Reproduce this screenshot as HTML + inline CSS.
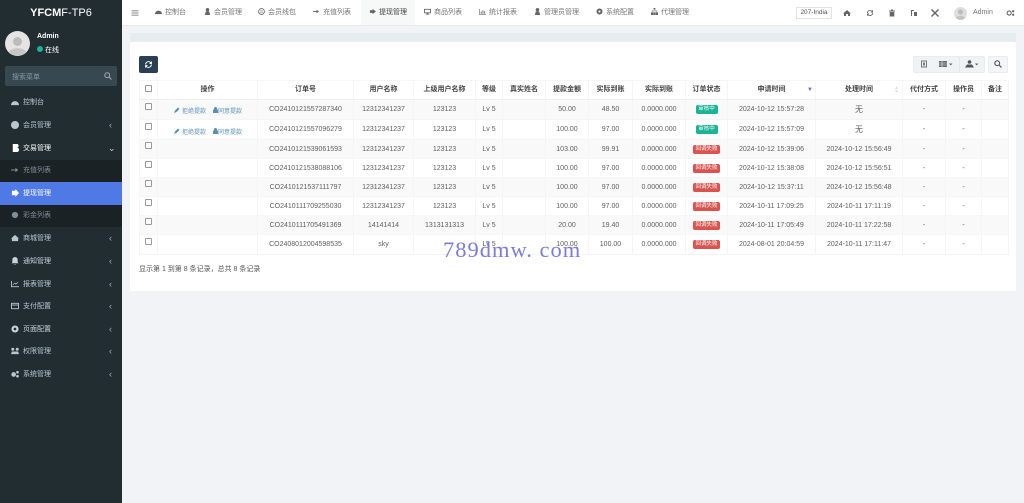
<!DOCTYPE html>
<html><head><meta charset="utf-8">
<style>
*{box-sizing:border-box}
html,body{margin:0;padding:0;width:1024px;height:503px;overflow:hidden;background:#f1f3f7;font-family:"Liberation Sans","Noto Sans CJK SC",sans-serif;font-size:7px;color:#555}
.a{position:absolute;white-space:nowrap}
#side{position:absolute;left:0;top:0;width:122px;height:503px;background:#222d32}
#head{position:absolute;left:122px;top:0;width:902px;height:26px;background:#fff;border-bottom:1px solid #e8ebed}
.m{position:absolute;left:0;width:122px;height:23px;color:#b8c7ce;font-size:7px;line-height:23px}
.m svg{position:absolute;left:11px;top:7px;width:8px;height:8px;fill:currentColor}
.m span{position:absolute;left:23px}
.m i{position:absolute;left:109px;top:0;font-style:normal;font-size:9px;color:#aab}
.n{position:absolute;top:0;height:26px;line-height:25px;font-size:7px;color:#777;white-space:nowrap}
.n svg{width:7px;height:7px;fill:#666;vertical-align:-1px;margin-right:3px}
.h{position:absolute;top:9px;width:8px;height:8px;fill:#666}
table{position:absolute;left:139px;top:80px;width:869px;border-collapse:collapse;table-layout:fixed;font-size:7px;color:#5f5f5f;text-align:center}
td,th{border:1px solid #f5f5f5;padding:0;overflow:hidden;white-space:nowrap}
th{height:19px;padding-bottom:2px;font-size:7px;color:#444;font-weight:bold;border-bottom:1px solid #eee}
tr.o td{background:#f9f9f9}
.cb{display:inline-block;width:7px;height:7px;border:1px solid #999;border-radius:1px;background:#fff;vertical-align:middle;position:relative;top:-3px}
.g,.r{display:inline-block;color:#fff;font-size:5.500px;border-radius:2px;line-height:9px;height:9px;vertical-align:middle}
.g{background:#1ab394;width:22px}.r{background:#d9534f;width:27px}
.lk{color:#5a90b8;font-size:6px;position:absolute;top:0}
.btn{position:absolute;top:56px;height:17px;background:#f0f2f4;border:1px solid #e9ebed}
</style></head><body>
<div id="side">
 <div class="a" style="left:0;top:7px;width:122px;text-align:center;color:#fff;font-size:11px;font-weight:bold">YFCM<span style="font-weight:normal">F-TP6</span></div>
 <svg class="a" style="left:5px;top:31px" width="25" height="25" viewBox="0 0 25 25"><circle cx="12.500" cy="12.500" r="12.500" fill="#e5e3e3"/><circle cx="12.500" cy="10.500" r="4.500" fill="#bbb"/><path d="M4 21c2-5 15-5 17 0a12 12 0 0 1-17 0z" fill="#c6c6c6"/></svg>
 <div class="a" style="left:37px;top:33px;color:#fff;font-weight:bold;font-size:7px;">Admin</div>
 <div class="a" style="left:37px;top:46px;width:6px;height:6px;border-radius:50%;background:#1ab394"></div>
 <div class="a" style="left:45px;top:45px;color:#fff;font-size:7px;">在线</div>
 <div class="a" style="left:5px;top:66px;width:112px;height:20px;background:#374850;border-radius:2px"></div>
 <div class="a" style="left:12px;top:72px;color:#8a9aa2;font-size:7px">搜索菜单</div>
 <svg class="a" style="left:104px;top:72px" width="8" height="8" viewBox="0 0 8 8"><circle cx="3.200" cy="3.200" r="2.400" fill="none" stroke="#aab" stroke-width="1"/><path d="M5 5l2.500 2.500" stroke="#aab"/></svg>

 <div class="m" style="top:91px"><svg viewBox="0 0 9 9"><path d="M0 8a4.500 4.500 0 0 1 9 0z"/></svg><span>控制台</span></div>
 <div class="m" style="top:114px"><svg viewBox="0 0 9 9"><circle cx="4.500" cy="4.500" r="4.500"/></svg><span>会员管理</span><i>‹</i></div>
 <div class="m" style="top:137px;color:#fff"><svg viewBox="0 0 9 9"><path d="M2 0h4a2 2 0 0 1 1 4a2.500 2.500 0 0 1-1 5H2z"/></svg><span>交易管理</span><i style="left:108px;color:#ccc">⌄</i></div>
 <div class="a" style="left:0;top:160px;width:122px;height:22px;background:#1b2226"></div>
 <div class="m" style="top:159px;color:#7f8e96"><svg viewBox="0 0 9 9"><path d="M0 4h5V2l3 2.500-3 2.500V5H0z"/></svg><span>充值列表</span></div>
 <div class="a" style="left:0;top:182px;width:122px;height:23px;background:#4f7ae6"></div>
 <div class="m" style="top:182px;color:#fff"><svg viewBox="0 0 9 9"><path d="M1 2h4V0l4 4.500L5 9V7H1z"/></svg><span>提现管理</span></div>
 <div class="a" style="left:0;top:205px;width:122px;height:22px;background:#1b2226"></div>
 <div class="m" style="top:204px;color:#7f8e96"><svg viewBox="0 0 9 9"><circle cx="4.500" cy="4.500" r="3.500"/></svg><span>彩金列表</span></div>
 <div class="m" style="top:227px"><svg viewBox="0 0 9 9"><path d="M4.500 1L9 5H8v3H1V5H0z"/></svg><span>商城管理</span><i>‹</i></div>
 <div class="m" style="top:250px;color:#c8d4d9"><svg viewBox="0 0 9 9"><path d="M4.500 0a3 3 0 0 1 3 3v3l1 1H.5l1-1V3a3 3 0 0 1 3-3zM3.500 8h2l-1 1z"/></svg><span>通知管理</span><i>‹</i></div>
 <div class="m" style="top:273px"><svg viewBox="0 0 9 9"><path d="M0 1h1v6h8v1H0zM2 5l2-2 1.500 1L8 2v1L5.500 5 4 4 2 6z"/></svg><span>报表管理</span><i>‹</i></div>
 <div class="m" style="top:295px"><svg viewBox="0 0 9 9"><path d="M0 1h9v7H0zM1 2v1h7V2zM1 4v3h7V4z"/></svg><span>支付配置</span><i>‹</i></div>
 <div class="m" style="top:318px;color:#c8d4d9"><svg viewBox="0 0 9 9"><path d="M4.500 .5a4 4 0 1 0 0 8 4 4 0 0 0 0-8zm0 2.500a1.500 1.500 0 1 1 0 3 1.500 1.500 0 0 1 0-3z"/></svg><span>页面配置</span><i>‹</i></div>
 <div class="m" style="top:340px"><svg viewBox="0 0 9 9"><circle cx="2" cy="2.500" r="1.700"/><circle cx="7" cy="2.500" r="1.700"/><path d="M1 5h7l1 3H0z"/></svg><span>权限管理</span><i>‹</i></div>
 <div class="m" style="top:363px"><svg viewBox="0 0 9 9"><circle cx="3" cy="5" r="2.600"/><circle cx="7.300" cy="2.500" r="1.500"/><circle cx="7.300" cy="7" r="1.500"/></svg><span>系统管理</span><i>‹</i></div>
</div>

<div id="head">
 <svg class="h" style="left:9px" viewBox="0 0 8 8"><path d="M.5 1.500h7v.8h-7zM.5 3.600h7v.8h-7zM.5 5.700h7v.8h-7z"/></svg>
 <div class="n" style="left:33px"><svg viewBox="0 0 8 8"><path d="M0 7a4 4 0 0 1 8 0z"/></svg>控制台</div>
 <div class="n" style="left:82px"><svg viewBox="0 0 8 8"><circle cx="4" cy="2" r="2"/><path d="M1 8l1-4h4l1 4z"/></svg>会员管理</div>
 <div class="n" style="left:136px"><svg viewBox="0 0 8 8"><circle cx="4" cy="4" r="3.300" fill="none" stroke="#666"/><path d="M2.500 3h3v.7h-3zM2.500 4.500h3v.7h-3z"/></svg>会员线包</div>
 <div class="n" style="left:191px"><svg viewBox="0 0 8 8"><path d="M0 3.500h4V2l3 2-3 2V4.500H0z"/></svg>充值列表</div>
 <div class="a" style="left:239px;top:0;width:54px;height:25px;background:#f7f8f8"></div>
 <div class="n" style="left:247px;color:#444"><svg viewBox="0 0 8 8"><path d="M1 2.500h3V1l4 3-4 3V5.500H1z"/></svg>提现管理</div>
 <div class="n" style="left:302px"><svg viewBox="0 0 8 8"><path d="M0 1h8v5H5v1h1v.5H2V7h1V6H0zM1 2v3h6V2z"/></svg>商品列表</div>
 <div class="n" style="left:357px"><svg viewBox="0 0 8 8"><path d="M0 1h.7v6H8v.7H0zM2 4h1v2.500H2zM4 2.500h1v4H4zM6 3.500h1v3H6z"/></svg>统计报表</div>
 <div class="n" style="left:412px"><svg viewBox="0 0 8 8"><circle cx="4" cy="2" r="2"/><path d="M1 8l1-4h4l1 4z"/></svg>管理员管理</div>
 <div class="n" style="left:474px"><svg viewBox="0 0 8 8"><path d="M4 .5a3.500 3.500 0 1 0 0 7 3.500 3.500 0 0 0 0-7zm0 2.300a1.200 1.200 0 1 1 0 2.400 1.200 1.200 0 0 1 0-2.400z"/></svg>系统配置</div>
 <div class="n" style="left:529px"><svg viewBox="0 0 8 8"><path d="M3 0h2v2H3zM0 5h2.500v3H0zM2.800 5h2.400v3H2.800zM5.500 5H8v3H5.500zM1 3h6v2H6.500V3.700h-5V5H1z"/></svg>代理管理</div>
 <div class="a" style="left:674px;top:7px;width:36px;height:12px;border:1px solid #e2e2e2;font-size:6.500px;line-height:10px;text-align:center;color:#555">207-India</div>
 <svg class="h" style="left:721px" viewBox="0 0 8 8"><path d="M4 1l4 3.500H7V7H5V5H3v2H1V4.500H0z"/></svg>
 <svg class="h" style="left:744px" viewBox="0 0 8 8"><path d="M1 4a3 3 0 0 1 5-2.200L7 1v2.500H4.500l1-1A2 2 0 0 0 2 4zM7 4a3 3 0 0 1-5 2.200L1 7V4.500h2.500l-1 1A2 2 0 0 0 6 4z"/></svg>
 <svg class="h" style="left:766px" viewBox="0 0 8 8"><path d="M1 1.500h6v1H1zM3 .5h2v1H3zM1.700 3h4.600v4.500H1.700z"/></svg>
 <svg class="h" style="left:788px" viewBox="0 0 8 8"><path d="M1 1h3v1H2v5H1zM4 3h3v4H4z"/></svg>
 <svg class="h" style="left:809px" viewBox="0 0 8 8"><path d="M.5.500l7 7M7.500.500l-7 7" stroke="#666" stroke-width="1.400"/></svg>
 <svg class="a" style="left:832px;top:7px" width="13" height="13" viewBox="0 0 13 13"><circle cx="6.500" cy="6.500" r="6.500" fill="#ddd"/><circle cx="6.500" cy="5" r="2.500" fill="#bbb"/><path d="M2 11c1-3 8-3 9 0a6.500 6.500 0 0 1-9 0z" fill="#c4c4c4"/></svg>
 <div class="a" style="left:851px;top:9px;font-size:7px;color:#777">Admin</div>
 <svg class="h" style="left:884px;width:9px" viewBox="0 0 9 9"><circle cx="3" cy="4.500" r="2.300" fill="none" stroke="#666" stroke-width="1.200"/><circle cx="7.500" cy="2.500" r="1.300"/><circle cx="7.500" cy="6.500" r="1.300"/></svg>
</div>

<div class="a" style="left:130px;top:33px;width:886px;height:10px;background:#e6edef"></div>
<div class="a" style="left:130px;top:42px;width:886px;height:249px;background:#fff;border-radius:2px"></div>
<div class="a" style="left:139px;top:56px;width:19px;height:17px;background:#2b3f54;border-radius:2px"></div>
<svg class="a" style="left:144px;top:60px" width="9" height="9" viewBox="0 0 8 8"><path d="M1 4a3 3 0 0 1 5-2.200L7 1v2.500H4.500l1-1A2 2 0 0 0 2 4zM7 4a3 3 0 0 1-5 2.200L1 7V4.500h2.500l-1 1A2 2 0 0 0 6 4z" fill="#fff"/></svg>
<div class="btn" style="left:913px;width:72px;border-radius:2px"></div>
<div class="btn" style="left:988px;width:20px;border-radius:2px;background:#f4f5f6"></div>
<div class="a" style="left:959px;top:56px;width:1px;height:17px;background:#e6e8ea"></div>
<svg class="a" style="left:920px;top:60px" width="8" height="8" viewBox="0 0 8 8"><path d="M1 .5h6v7H1zM2 1.500v5h4v-5zM3 2.500h2v3H3z" fill="#777"/></svg>
<svg class="a" style="left:939px;top:60px" width="14" height="8" viewBox="0 0 14 8"><path d="M0 1h8v6H0z" fill="#666"/><path d="M0 3h8M0 5h8M3 1v6" stroke="#f0f2f4" stroke-width=".6"/><path d="M10 3.500h3.500L11.700 5.500z" fill="#666"/></svg>
<svg class="a" style="left:965px;top:60px" width="14" height="8" viewBox="0 0 14 8"><circle cx="4.500" cy="2" r="1.800" fill="#555"/><path d="M0 7.500l2-3h5l2 3z" fill="#555"/><path d="M10 3.500h3.500L11.700 5.500z" fill="#666"/></svg>
<svg class="a" style="left:994px;top:60px" width="8" height="8" viewBox="0 0 8 8"><circle cx="3.200" cy="3.200" r="2.400" fill="none" stroke="#555" stroke-width="1.100"/><path d="M5 5l2.500 2.500" stroke="#555" stroke-width="1.200"/></svg>

<table>
<colgroup><col style="width:18px"><col style="width:100px"><col style="width:96px"><col style="width:60px"><col style="width:62px"><col style="width:27px"><col style="width:43px"><col style="width:43px"><col style="width:44px"><col style="width:53px"><col style="width:42px"><col style="width:88px"><col style="width:87px"><col style="width:43px"><col style="width:36px"><col style="width:27px"></colgroup>
<tr><th><span class="cb" style="top:0"></span></th><th>操作</th><th>订单号</th><th>用户名称</th><th>上级用户名称</th><th>等级</th><th>真实姓名</th><th>提款金额</th><th>实际到账</th><th>实际到账</th><th>订单状态</th><th>申请时间</th><th>处理时间</th><th>代付方式</th><th>操作员</th><th>备注</th></tr>
<tr class="o" style="height:20px"><td><span class="cb"></span></td><td></td><td>CO2410121557287340</td><td>12312341237</td><td>123123</td><td>Lv 5</td><td></td><td>50.00</td><td>48.50</td><td>0.0000.000</td><td><span class="g">审核中</span></td><td>2024-10-12 15:57:28</td><td style="font-size:8px">无</td><td>-</td><td>-</td><td></td></tr>
<tr style="height:20px"><td><span class="cb"></span></td><td></td><td>CO2410121557096279</td><td>12312341237</td><td>123123</td><td>Lv 5</td><td></td><td>100.00</td><td>97.00</td><td>0.0000.000</td><td><span class="g">审核中</span></td><td>2024-10-12 15:57:09</td><td style="font-size:8px">无</td><td>-</td><td>-</td><td></td></tr>
<tr class="o" style="height:19px"><td><span class="cb"></span></td><td></td><td>CO2410121539061593</td><td>12312341237</td><td>123123</td><td>Lv 5</td><td></td><td>103.00</td><td>99.91</td><td>0.0000.000</td><td><span class="r">回调失败</span></td><td>2024-10-12 15:39:06</td><td>2024-10-12 15:56:49</td><td>-</td><td>-</td><td></td></tr>
<tr style="height:19px"><td><span class="cb"></span></td><td></td><td>CO2410121538088106</td><td>12312341237</td><td>123123</td><td>Lv 5</td><td></td><td>100.00</td><td>97.00</td><td>0.0000.000</td><td><span class="r">回调失败</span></td><td>2024-10-12 15:38:08</td><td>2024-10-12 15:56:51</td><td>-</td><td>-</td><td></td></tr>
<tr class="o" style="height:19px"><td><span class="cb"></span></td><td></td><td>CO2410121537111797</td><td>12312341237</td><td>123123</td><td>Lv 5</td><td></td><td>100.00</td><td>97.00</td><td>0.0000.000</td><td><span class="r">回调失败</span></td><td>2024-10-12 15:37:11</td><td>2024-10-12 15:56:48</td><td>-</td><td>-</td><td></td></tr>
<tr style="height:19px"><td><span class="cb"></span></td><td></td><td>CO2410111709255030</td><td>12312341237</td><td>123123</td><td>Lv 5</td><td></td><td>100.00</td><td>97.00</td><td>0.0000.000</td><td><span class="r">回调失败</span></td><td>2024-10-11 17:09:25</td><td>2024-10-11 17:11:19</td><td>-</td><td>-</td><td></td></tr>
<tr class="o" style="height:19px"><td><span class="cb"></span></td><td></td><td>CO2410111705491369</td><td>14141414</td><td>1313131313</td><td>Lv 5</td><td></td><td>20.00</td><td>19.40</td><td>0.0000.000</td><td><span class="r">回调失败</span></td><td>2024-10-11 17:05:49</td><td>2024-10-11 17:22:58</td><td>-</td><td>-</td><td></td></tr>
<tr style="height:20px"><td><span class="cb"></span></td><td></td><td>CO2408012004598535</td><td>sky</td><td></td><td>Lv 5</td><td></td><td>100.00</td><td>100.00</td><td>0.0000.000</td><td><span class="r">回调失败</span></td><td>2024-08-01 20:04:59</td><td>2024-10-11 17:11:47</td><td>-</td><td>-</td><td></td></tr>
</table>
<div class="a" style="left:807px;top:87px;color:#6a6ad0;font-size:6px">▼</div>
<div class="a" style="left:894px;top:86px;color:#ddd;font-size:5px;line-height:4px">▲<br>▼</div>
<svg class="a" style="left:174px;top:107px" width="6" height="6" viewBox="0 0 6 6"><path d="M0 6l1-2.500L4 .5 5.500 2 2.500 5z" fill="#5a90b8"/></svg><div class="a lk" style="left:182px;top:106px">拒绝提款</div>
<svg class="a" style="left:213px;top:107px" width="5" height="6" viewBox="0 0 5 6"><path d="M0 2.500h5V6H0zM1 2.500V1.500a1.500 1.500 0 0 1 3 0v1" fill="#5a90b8"/></svg><div class="a lk" style="left:218px;top:106px">同意提款</div>
<svg class="a" style="left:174px;top:128px" width="6" height="6" viewBox="0 0 6 6"><path d="M0 6l1-2.500L4 .5 5.500 2 2.500 5z" fill="#5a90b8"/></svg><div class="a lk" style="left:182px;top:127px">拒绝提款</div>
<svg class="a" style="left:213px;top:128px" width="5" height="6" viewBox="0 0 5 6"><path d="M0 2.500h5V6H0zM1 2.500V1.500a1.500 1.500 0 0 1 3 0v1" fill="#5a90b8"/></svg><div class="a lk" style="left:218px;top:127px">同意提款</div>
<div class="a" style="left:139px;top:264px;font-size:7px;color:#555">显示第 1 到第 8 条记录，总共 8 条记录</div>
<div class="a" style="left:443px;top:237px;font-family:'Liberation Serif',serif;font-size:22.500px;color:#7c7cd8;letter-spacing:1px">789dmw. com</div>
</body></html>
